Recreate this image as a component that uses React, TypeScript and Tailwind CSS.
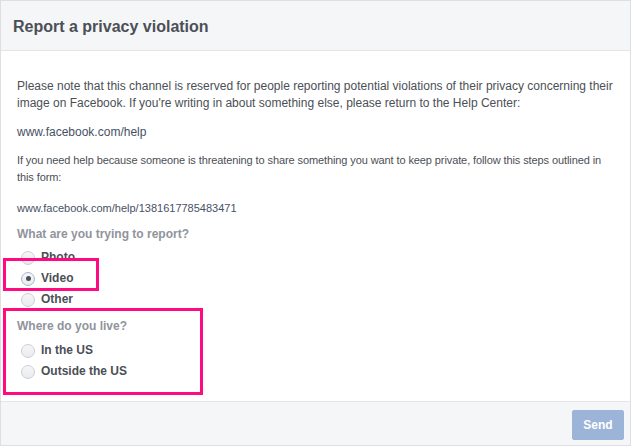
import React from 'react';

function Radio({ label, checked }: { label: string; checked?: boolean }) {
  return (
    <div className="flex h-[21px] items-center">
      <span
        className={`ml-[4px] flex h-[14px] w-[14px] items-center justify-center rounded-full border bg-gradient-to-b from-[#f5f6f7] to-[#e9ebee] ${
          checked ? 'border-[#a4b6d6]' : 'border-[#ccd0d5]'
        }`}
      >
        {checked && <span className="h-[5px] w-[5px] rounded-full bg-[#4b4f56]" />}
      </span>
      <span className="ml-[6px] text-[12px] font-bold leading-[17px] text-[#4b4f56]">{label}</span>
    </div>
  );
}

export default function App() {
  return (
    <div className="relative flex h-[446px] w-[631px] flex-col border border-[#dddfe2] bg-white font-['Liberation_Sans',Arial,sans-serif]">
      <div className="flex h-[50px] shrink-0 items-center border-b border-[#e5e5e5] bg-[#f5f6f7] pl-[12px] pt-[2px]">
        <h1 className="text-[16px] font-bold text-[#4b4f56]">Report a privacy violation</h1>
      </div>

      <div className="flex-1 px-[16px] pt-[27px] text-[12px] leading-[17px] text-[#4b4f56]">
        <p>
          Please note that this channel is reserved for people reporting potential violations of their privacy concerning their
          image on Facebook. If you're writing in about something else, please return to the Help Center:
        </p>
        <p className="mt-[12px] text-[#475166]">www.facebook.com/help</p>
        <p className="mr-[-4px] mt-[11px] text-[11px] tracking-[-0.1px]">
          If you need help because someone is threatening to share something you want to keep private, follow this steps outlined in
          this form:
        </p>
        <p className="mt-[14px] text-[11px] text-[#475166]">www.facebook.com/help/1381617785483471</p>

        <div className="mt-[9px] font-bold text-[#90949c]">What are you trying to report?</div>
        <div className="mt-[4px]">
          <Radio label="Photo" />
          <Radio label="Video" checked />
          <Radio label="Other" />
        </div>

        <div className="mt-[8px] font-bold text-[#90949c]">Where do you live?</div>
        <div className="mt-[5px]">
          <Radio label="In the US" />
          <Radio label="Outside the US" />
        </div>
      </div>

      <div className="flex h-[44px] shrink-0 items-center justify-end border-t border-[#e5e5e5] bg-[#f5f6f7] pr-[6px]">
        <button className="mt-[2px] h-[30px] w-[52px] rounded-[2px] border border-[#9cb4d8] bg-[#9cb4d8] text-[12px] font-bold text-white">
          Send
        </button>
      </div>

      {/* annotation boxes */}
      <div className="pointer-events-none absolute left-[2px] top-[257px] h-[33px] w-[96px] border-[3px] border-[#ff0a80]" />
      <div className="pointer-events-none absolute left-[2px] top-[307px] h-[87px] w-[200px] border-[3px] border-[#ff0a80]" />
    </div>
  );
}
